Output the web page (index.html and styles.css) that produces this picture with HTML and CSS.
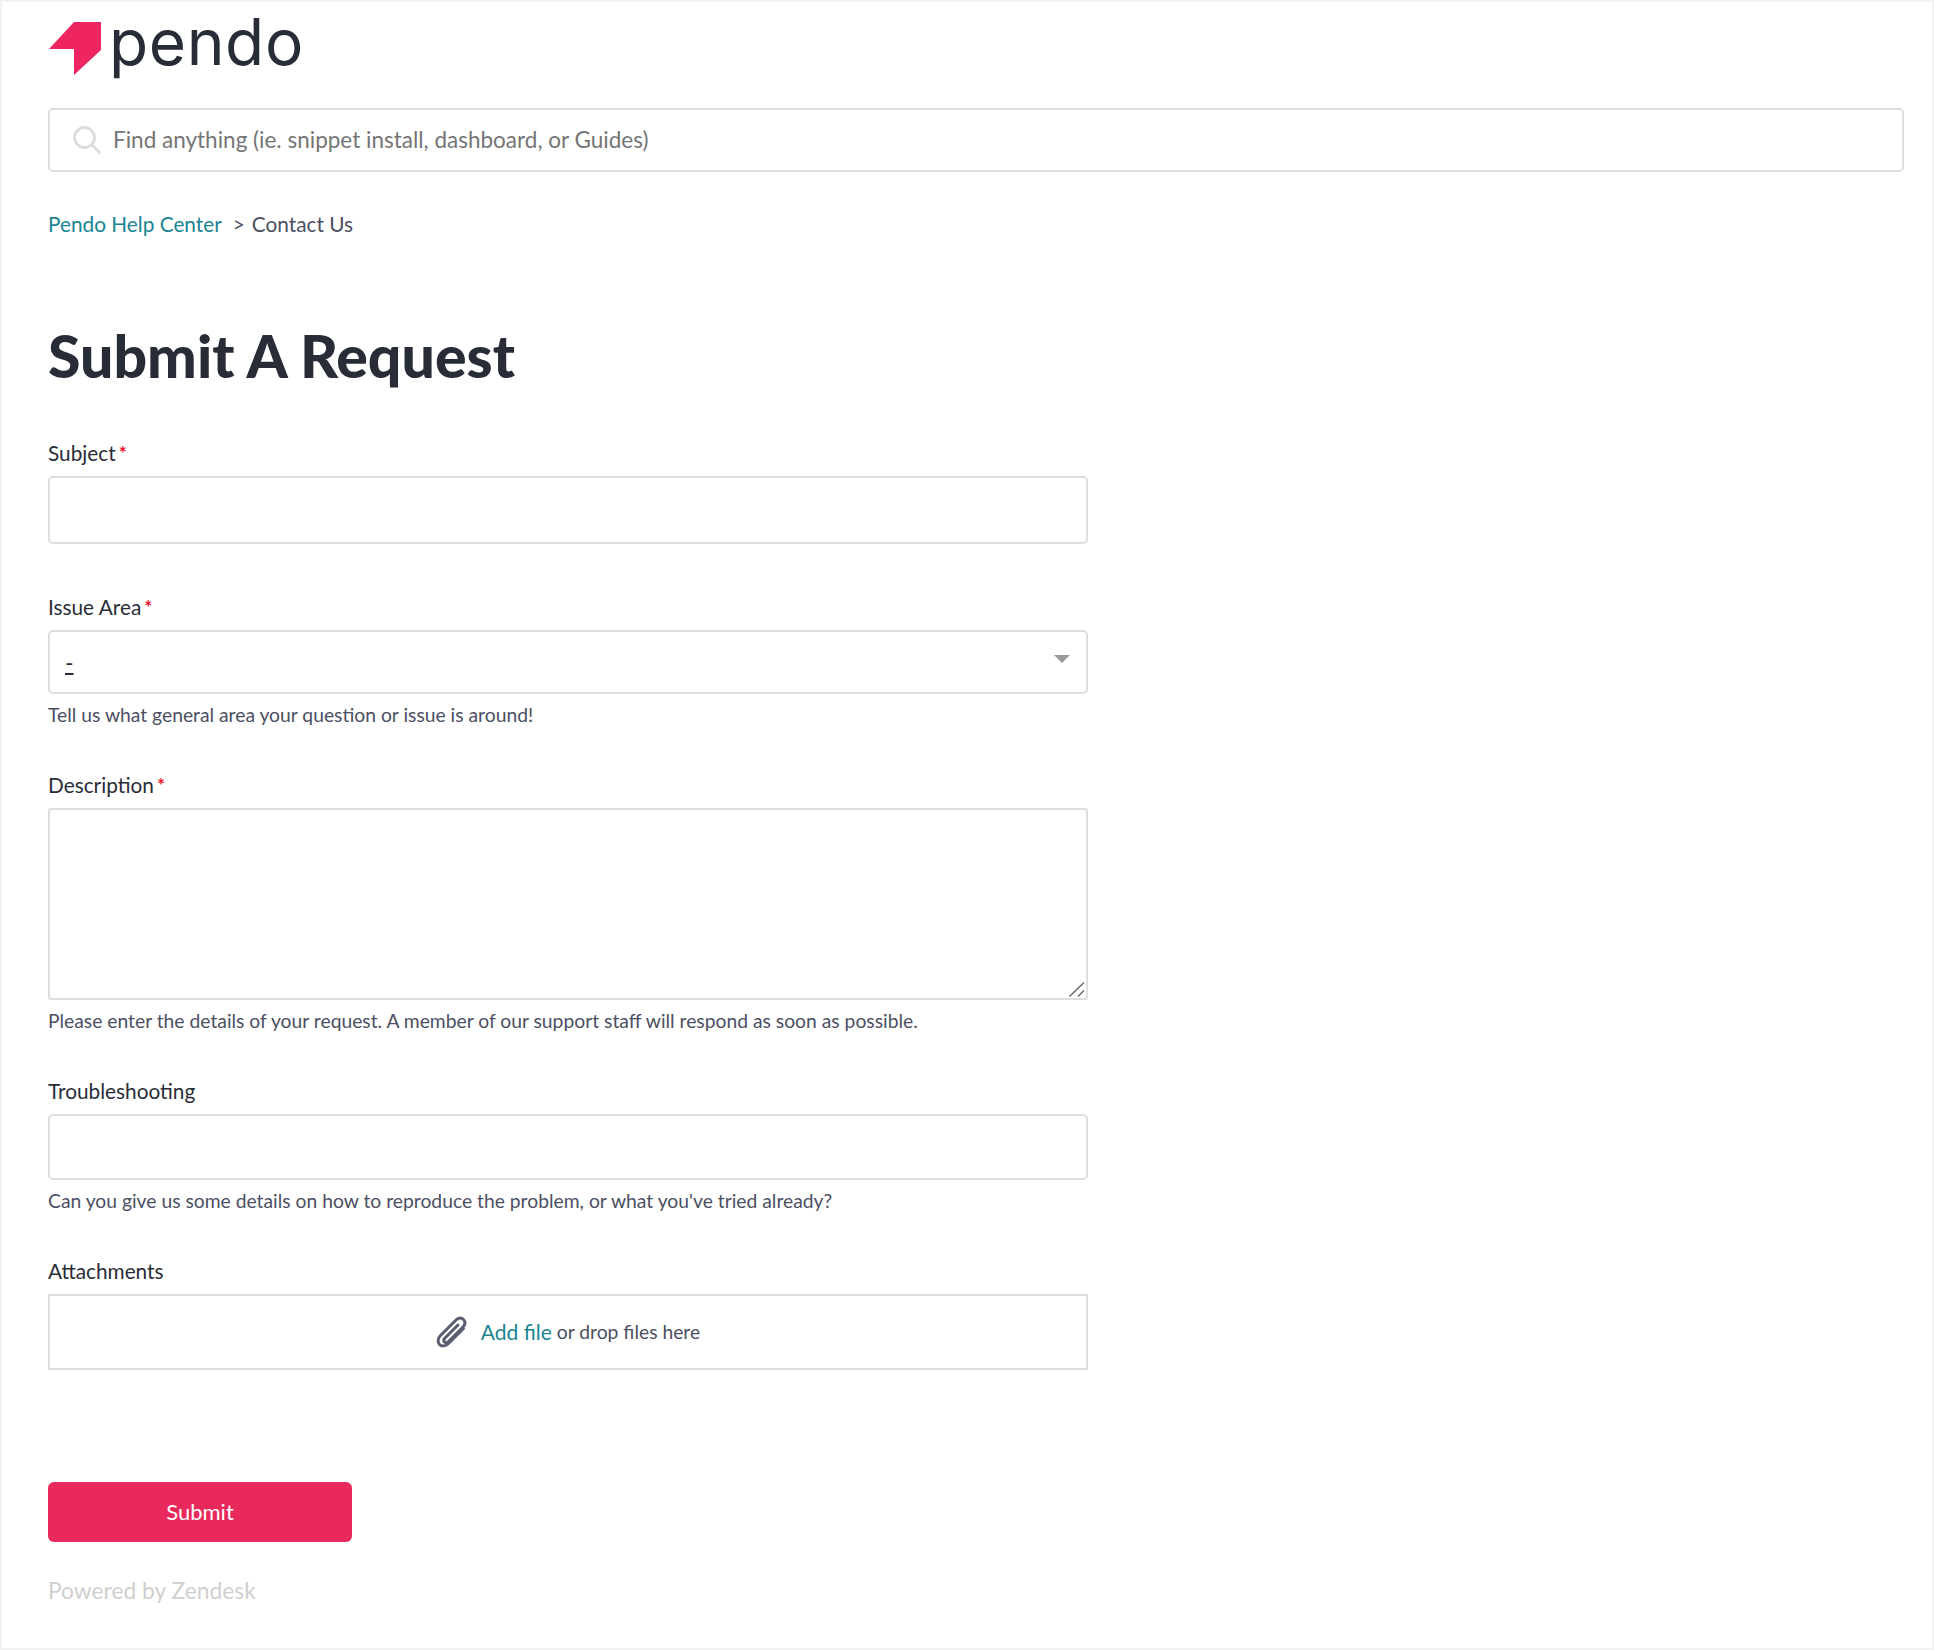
FILE: index.html
```html
<!DOCTYPE html>
<html lang="en">
<head>
<meta charset="utf-8">
<title>Submit A Request – Pendo Help Center</title>
<link rel="stylesheet" href="styles.css">
</head>
<body>
<div class="page">
  <header class="brand">
    <svg class="mark" viewBox="0 0 52 53" width="52" height="53" aria-hidden="true"><polygon points="0,27 25,0 52,0 52,28 25,53 25,27"/></svg>
    <span class="wordmark">pendo</span>
  </header>
  <form class="search">
    <svg class="search-icon" viewBox="0 0 30 30" width="30" height="30" aria-hidden="true"><circle cx="12.500" cy="12.500" r="10"/><line x1="20" y1="20" x2="27.500" y2="27.500"/></svg>
    <input class="search-input" type="text" placeholder="Find anything (ie. snippet install, dashboard, or Guides)">
  </form>
  <nav class="crumbs"><a class="link" href="#">Pendo Help Center</a><span class="sep">&gt;</span><span>Contact Us</span></nav>
  <h1 class="title">Submit A Request</h1>
  <form class="request">
    <div class="field f-subject">
      <label class="label">Subject<span class="req">*</span></label>
      <input class="control h-subject" type="text">
    </div>
    <div class="field f-issue">
      <label class="label">Issue Area<span class="req">*</span></label>
      <div class="control h-select select"><a class="select-value">-</a><span class="caret"></span></div>
      <p class="hint">Tell us what general area your question or issue is around!</p>
    </div>
    <div class="field f-desc">
      <label class="label">Description<span class="req">*</span></label>
      <div class="area-wrap">
        <textarea class="control h-area"></textarea>
        <svg class="grip" viewBox="0 0 16 15" width="16" height="15" aria-hidden="true"><line x1="0.500" y1="14.500" x2="15" y2="0.500"/><line x1="9" y1="14.500" x2="15" y2="8.500"/></svg>
      </div>
      <p class="hint">Please enter the details of your request. A member of our support staff will respond as soon as possible.</p>
    </div>
    <div class="field f-trouble">
      <label class="label">Troubleshooting</label>
      <input class="control h-trouble" type="text">
      <p class="hint">Can you give us some details on how to reproduce the problem, or what you've tried already?</p>
    </div>
    <div class="field f-attach">
      <label class="label">Attachments</label>
      <div class="drop">
        <svg class="clip" viewBox="0 0 32 34" width="32" height="34" aria-hidden="true"><path d="M27.500 13.500 12.500 28.500c-3 3-7 3-9 1s-2-6 1-9L20 5c2.500-2.500 5.500-2.500 7.500-.5s2 5-.5 7.500L12.500 26.500c-1.500 1.500-3 1.500-4 .5s-1-2.500.5-4L22 10"/></svg>
        <a class="link add" href="#">Add file</a><span class="drop-rest">or drop files here</span>
      </div>
    </div>
    <button class="submit" type="button">Submit</button>
  </form>
  <footer class="powered">Powered by Zendesk</footer>
</div>
</body>
</html>
```
FILE: styles.css
```css
* { box-sizing: border-box; }
html, body { margin: 0; padding: 0; }
body {
  background: #f3f3f3;
  font-family: "Lato", "Liberation Sans", sans-serif;
  color: #2a2d38;
  height: 1650px;
  overflow: hidden;
}
.page {
  margin: 2px 2px 0;
  height: 1646px;
  background: #fff;
  padding: 0 28px 0 46px;
}
.brand {
  display: flex;
  align-items: flex-start;
  height: 106px;
  padding-top: 20px;
}
.mark { fill: #ee2560; margin-left: 1px; flex: none; }
.wordmark {
  font-family: "Inter", "Lato", sans-serif;
  font-size: 64px;
  line-height: 64px;
  margin-left: 8px;
  margin-top: -12px;
  letter-spacing: 0.600px;
  color: #282c37;
}
.search {
  display: flex;
  align-items: center;
  height: 64px;
  border: 2px solid #dedede;
  border-radius: 5px;
  padding-left: 22px;
}
.search-icon { flex: none; fill: none; stroke: #dcdcdc; stroke-width: 2.8; stroke-linecap: round; }
.search-input {
  flex: 1;
  border: 0;
  outline: 0;
  font: inherit;
  font-size: 22.500px;
  margin-left: 11px;
  padding: 0 0 2px;
  color: #757575;
}
.search-input::placeholder { color: #757575; opacity: 1; }
.crumbs {
  display: flex;
  margin-top: 39px;
  font-size: 20.800px;
  line-height: 26px;
  color: #4c4f63;
}
.link { color: #1a8494; text-decoration: none; }
.sep { margin: 0 7px 0 11px; }
.title {
  margin: 85px 0 0;
  font-size: 59px;
  line-height: 68px;
  font-weight: 900;
  color: #282c37;
}
.request { width: 1040px; }
.field { display: block; }
.f-subject { margin-top: 51px; }
.f-issue { margin-top: 51px; }
.f-desc { margin-top: 46px; }
.f-trouble { margin-top: 46px; }
.f-attach { margin-top: 46px; }
.label {
  display: block;
  font-size: 20.800px;
  line-height: 24px;
  color: #2a2d38;
  margin-bottom: 11px;
}
.req { color: #f0142f; font-size: 19px; font-weight: 700; margin-left: 3px; vertical-align: 1px; line-height: 1; }
.control {
  display: block;
  width: 100%;
  border: 2px solid #dedede;
  border-radius: 5px;
  background: #fff;
  outline: 0;
  font: inherit;
  margin: 0;
}
.h-subject { height: 68px; }
.h-select { height: 64px; }
.h-area { height: 192px; border-radius: 3px; resize: none; }
.h-trouble { height: 66px; }
.select { position: relative; padding: 16px 0 0 15px; font-size: 23px; line-height: 28px; color: #2a2d38; }
.select-value { text-decoration: underline; }
.caret {
  position: absolute;
  right: 16px;
  top: 23px;
  width: 0;
  height: 0;
  border-left: 8px solid transparent;
  border-right: 8px solid transparent;
  border-top: 8px solid #999;
}
.area-wrap { position: relative; }
.grip {
  position: absolute;
  right: 3px;
  bottom: 3px;
  fill: none;
  stroke: #666;
  stroke-width: 1.400;
}
.hint { margin: 9px 0 1px; font-size: 19.300px; line-height: 24px; color: #4c4f63; }
.drop {
  display: flex;
  align-items: center;
  justify-content: center;
  height: 76px;
  border: 2px solid #dedede;
  font-size: 21px;
  padding-bottom: 2px;
}
.clip { fill: none; stroke: #5a5d70; stroke-width: 3; stroke-linecap: round; stroke-linejoin: round; margin-right: 13px; margin-top: 2px; }
.add { margin-right: 5px; }
.drop-rest { font-size: 19.300px; color: #4c4f63; }
.submit {
  display: block;
  width: 304px;
  height: 60px;
  margin-top: 112px;
  border: 0;
  border-radius: 6px;
  background: #e9285c;
  color: #fff;
  font: inherit;
  font-size: 22px;
  padding: 0 0 2px;
}
.powered { margin-top: 34px; font-size: 22.800px; line-height: 28px; color: #cfcfcf; }
```
